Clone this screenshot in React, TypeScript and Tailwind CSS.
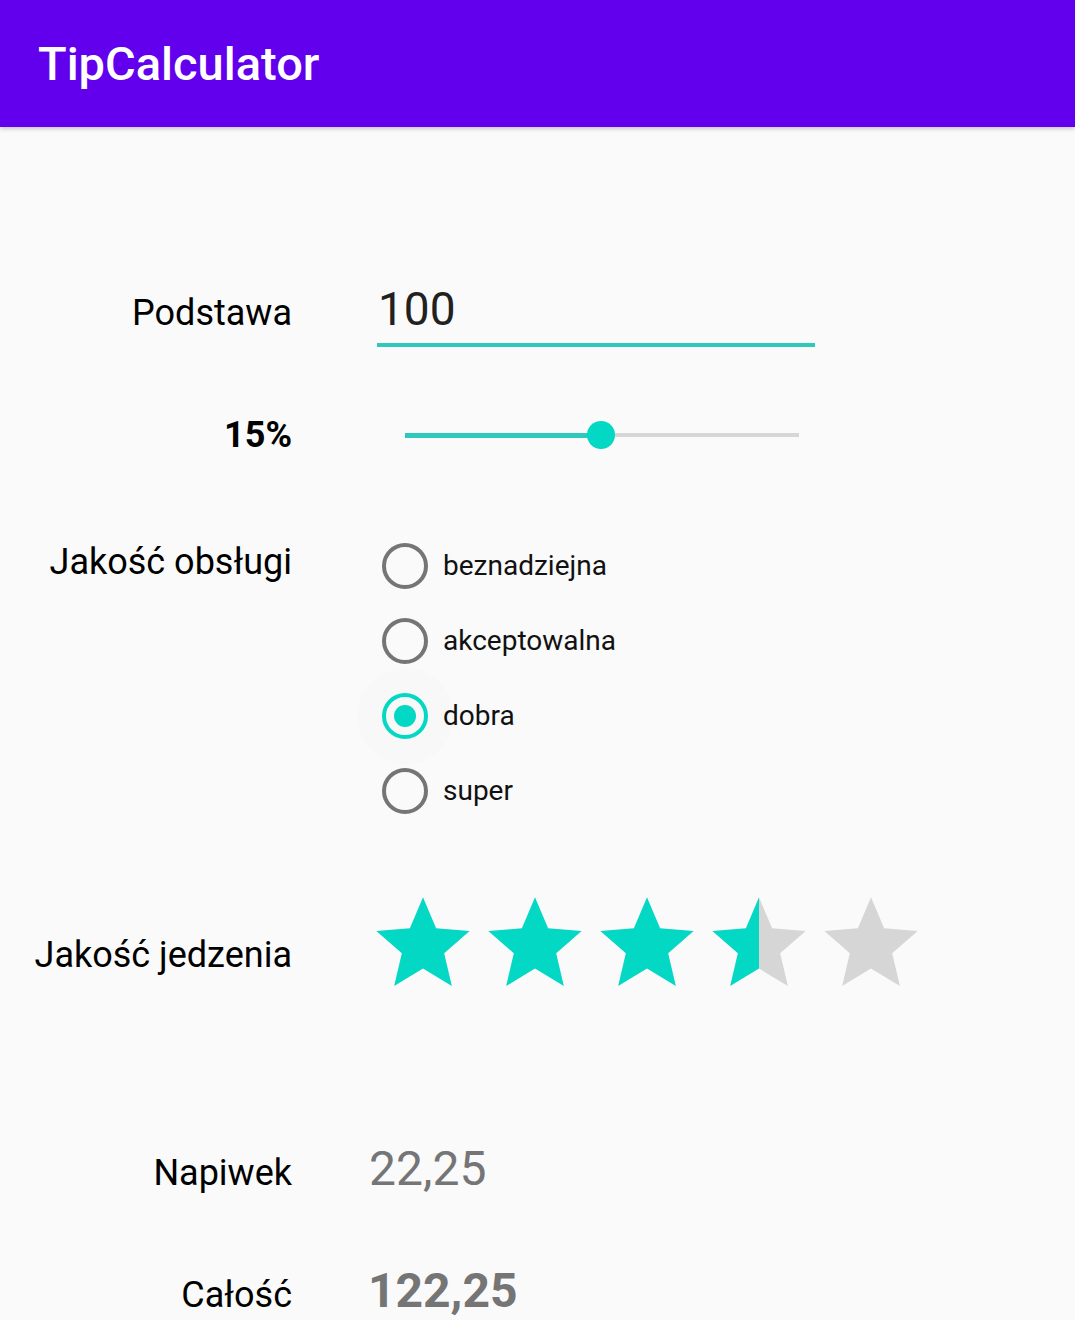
import React from 'react';

const options = ['beznadziejna', 'akceptowalna', 'dobra', 'super'];
const selected = 'dobra';
const rating = 3.5;

const STAR = 'M12 17.27L18.18 21l-1.64-7.03L22 9.24l-7.19-.61L12 2 9.19 8.63 2 9.24l5.46 4.73L5.82 21z';

function Star({ fill }: { fill: 'full' | 'half' | 'empty' }) {
  return (
    <svg viewBox="0 0 24 24" className="w-[112px] h-[112px] shrink-0">
      <defs>
        <linearGradient id="half-star" x1="0" y1="0" x2="1" y2="0">
          <stop offset="0.5" stopColor="#03d8c4" />
          <stop offset="0.5" stopColor="#d6d6d6" />
        </linearGradient>
      </defs>
      <path
        d={STAR}
        fill={fill === 'full' ? '#03d8c4' : fill === 'half' ? 'url(#half-star)' : '#d6d6d6'}
      />
    </svg>
  );
}

export default function App() {
  const stars = [1, 2, 3, 4, 5].map((i) =>
    rating >= i ? 'full' : rating >= i - 0.5 ? 'half' : 'empty'
  ) as ('full' | 'half' | 'empty')[];

  return (
    <div className="min-h-screen bg-[#fafafa] font-['Roboto',sans-serif] text-black overflow-hidden">
      <header className="h-[127px] bg-[#6200ee] px-[38px] flex items-center shadow-[0_2px_4px_rgba(0,0,0,0.2)]">
        <h1 className="text-[47px] font-medium text-white leading-none">TipCalculator</h1>
      </header>

      {/* Podstawa */}
      <div className="flex mt-[155px]">
        <div className="w-[292px] text-right pt-[9px] text-[36px] leading-[44px]">Podstawa</div>
        <div className="ml-[85px] w-[438px]">
          <div className="text-[46px] leading-[54px] text-[#212121] pl-[1px]">100</div>
          <div className="mt-[7px] h-[4px] bg-[#2ec8bc]" />
        </div>
      </div>

      {/* procent */}
      <div className="flex items-center h-[42px] mt-[67px]">
        <div className="w-[292px] text-right text-[36px] font-bold leading-[42px]">15%</div>
        <div className="ml-[113px] w-[394px] h-[28px] relative flex items-center">
          <div className="w-[196px] h-[5px] bg-[#2ec8bc]" />
          <div className="flex-1 h-[4px] bg-[#d6d6d6]" />
          <div className="absolute left-[182px] top-0 w-[28px] h-[28px] rounded-full bg-[#03d8c4]" />
        </div>
      </div>

      {/* Jakość obsługi */}
      <div className="flex items-start mt-[72px]">
        <div className="w-[292px] text-right pt-[12px] text-[36px] leading-[44px]">Jakość obsługi</div>
        <div className="ml-[90px] flex flex-col">
          {options.map((o) => (
            <div key={o} className="h-[75px] flex items-center">
              <div className="relative w-[46px] h-[46px] shrink-0">
                {o === selected && (
                  <div className="absolute -left-[25px] -top-[25px] w-[96px] h-[96px] rounded-full bg-[#f8f8f8]" />
                )}
                <div
                  className={`relative w-[46px] h-[46px] rounded-full border-[4px] flex items-center justify-center ${
                    o === selected ? 'border-[#03d8c4]' : 'border-[#757575]'
                  }`}
                >
                  {o === selected && <div className="w-[22px] h-[22px] rounded-full bg-[#03d8c4]" />}
                </div>
              </div>
              <span className="relative ml-[15px] text-[28px] text-[#111]">{o}</span>
            </div>
          ))}
        </div>
      </div>

      {/* Jakość jedzenia */}
      <div className="flex items-start mt-[60px]">
        <div className="w-[292px] text-right pt-[45px] text-[36px] leading-[44px]">Jakość jedzenia</div>
        <div className="ml-[75px] flex">
          {stars.map((s, i) => (
            <Star key={i} fill={s} />
          ))}
        </div>
      </div>

      {/* Napiwek */}
      <div className="flex items-baseline mt-[142px]">
        <div className="w-[292px] text-right text-[36px] leading-[44px]">Napiwek</div>
        <div className="ml-[77px] text-[48px] leading-[54px] text-[#757575]">22,25</div>
      </div>

      {/* Całość */}
      <div className="flex items-baseline mt-[68px]">
        <div className="w-[292px] text-right text-[36px] leading-[44px]">Całość</div>
        <div className="ml-[76px] text-[48px] leading-[54px] font-bold text-[#757575]">122,25</div>
      </div>
    </div>
  );
}
